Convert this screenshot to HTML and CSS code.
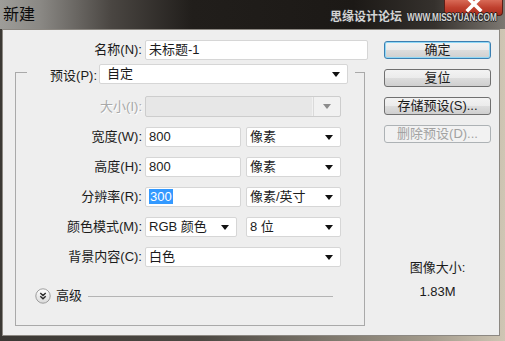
FILE: index.html
```html
<!DOCTYPE html>
<html lang="zh">
<head>
<meta charset="utf-8">
<title>新建</title>
<link rel="stylesheet" href="styles.css">
</head>
<body>
<div class="window">
  <div class="titlebar">
    <span class="title">新建</span>
    <div class="close">
      <svg width="59" height="16" viewBox="0 0 59 16"><path d="M24 -2 L36 10 M36 -2 L24 10" stroke="#fff" stroke-width="3.6" stroke-linecap="square" fill="none"/></svg>
    </div>
    <div class="watermark"><span class="wm-cn">思缘设计论坛</span><span class="wm-en">WWW.MISSYUAN.COM</span></div>
  </div>
  <div class="panel">
    <div class="form">
      <div class="row">
        <span class="lbl lbl-top">名称(N):</span>
        <div class="field text w-name">未标题-1</div>
      </div>
      <fieldset class="group">
        <legend class="legend">
          <div class="legend-inner">
            <span class="lbl-p">预设(P):</span>
            <div class="field combo w-preset"><span>自定</span><i class="arrow"></i></div>
          </div>
        </legend>
        <div class="group-body">
          <div class="row r-size">
            <span class="lbl disabled">大小(I):</span>
            <div class="field combo dis w-full"><span></span><b class="sep"></b><i class="arrow grey"></i></div>
          </div>
          <div class="row">
            <span class="lbl">宽度(W):</span>
            <div class="field text w-num">800</div>
            <div class="field combo w-unit"><span>像素</span><i class="arrow"></i></div>
          </div>
          <div class="row">
            <span class="lbl">高度(H):</span>
            <div class="field text w-num">800</div>
            <div class="field combo w-unit"><span>像素</span><i class="arrow"></i></div>
          </div>
          <div class="row">
            <span class="lbl">分辨率(R):</span>
            <div class="field text w-num"><span class="sel">300</span></div>
            <div class="field combo w-unit"><span>像素/英寸</span><i class="arrow"></i></div>
          </div>
          <div class="row">
            <span class="lbl">颜色模式(M):</span>
            <div class="field combo w-mode"><span>RGB 颜色</span><i class="arrow"></i></div>
            <div class="field combo w-bits"><span>8 位</span><i class="arrow"></i></div>
          </div>
          <div class="row">
            <span class="lbl">背景内容(C):</span>
            <div class="field combo w-full"><span>白色</span><i class="arrow"></i></div>
          </div>
          <div class="advanced">
            <svg class="adv-icon" width="16" height="16" viewBox="0 0 16 16">
              <defs><linearGradient id="g" x1="0" y1="0" x2="0" y2="1"><stop offset="0" stop-color="#ffffff"/><stop offset="1" stop-color="#d9d9d9"/></linearGradient></defs>
              <circle cx="8" cy="8" r="7.2" fill="url(#g)" stroke="#9d9d9d" stroke-width="1"/>
              <path d="M5.3 5 L8 7.6 L10.7 5 M5.3 8.2 L8 10.8 L10.7 8.2" stroke="#2a2a2a" stroke-width="1.4" fill="none"/>
            </svg>
            <span class="adv-text">高级</span>
            <span class="adv-line"></span>
          </div>
        </div>
      </fieldset>
    </div>
    <div class="side">
      <div class="btn default">确定</div>
      <div class="btn">复位</div>
      <div class="btn">存储预设(S)...</div>
      <div class="btn disabled-btn">删除预设(D)...</div>
      <div class="info">
        <div>图像大小:</div>
        <div class="info-val">1.83M</div>
      </div>
    </div>
  </div>
</div>
</body>
</html>
```

FILE: styles.css
```css
* { box-sizing: border-box; }
html, body { margin: 0; padding: 0; }
body {
  width: 505px;
  height: 341px;
  overflow: hidden;
  font-family: "Liberation Sans", "Noto Sans CJK SC", sans-serif;
  font-size: 13px;
  color: #1b1b1b;
  background: #2e2b28;
}
.window {
  width: 505px;
  height: 341px;
  display: flex;
  flex-direction: column;
  background: linear-gradient(to right, #3b3834 0%, #4d4943 40%, #a39b8c 85%, #cfc6b4 100%);
}
.titlebar {
  height: 29px;
  flex: none;
  position: relative;
  background: linear-gradient(to right, #9e9d99 0%, #8a8884 8%, #4a4642 22%, #211e1b 38%, #1c1916 70%, #35312d 86%, #7d7872 100%);
}
.title {
  display: block;
  padding: 3px 0 0 3px;
  font-family: "Noto Sans CJK SC", sans-serif;
  font-size: 16px;
  line-height: 20px;
  color: #0c0c0c;
}
.close {
  position: absolute;
  left: 444px;
  top: 0;
  width: 59px;
  height: 16px;
  border: 1px solid #5a1f18;
  border-top: none;
  border-radius: 0 0 4px 4px;
  background: linear-gradient(#d86a57, #c0412f 50%, #a92c1d 100%);
  overflow: hidden;
}
.close svg { display: block; margin: 0 0 0 -1px; }
.watermark {
  position: absolute;
  left: 330px;
  top: 8px;
  width: 172px;
  display: flex;
  align-items: flex-end;
  z-index: 2;
  white-space: nowrap;
  color: #d4d4d4;
  text-shadow: 1px 0 0 #222, -1px 0 0 #222, 0 1px 0 #222, 0 -1px 0 #222;
}
.wm-cn {
  font-family: "Noto Sans CJK SC", sans-serif;
  font-size: 12px;
  font-weight: bold;
  line-height: 16px;
}
.wm-en {
  display: inline-block;
  margin-left: 5px;
  font-family: "Liberation Sans", sans-serif;
  font-size: 10px;
  font-weight: bold;
  line-height: 12px;
  transform: scaleX(0.82);
  transform-origin: left bottom;
}
.panel {
  flex: 1;
  margin: 0 5px 5px 2px;
  border: 1px solid #8c8882;
  background: #eeeeee;
  display: flex;
}
.form {
  width: 365px;
  padding-top: 10px;
}
.row {
  display: flex;
  align-items: center;
  height: 20px;
}
.lbl {
  width: 129px;
  padding-right: 3px;
  text-align: right;
  white-space: nowrap;
  line-height: 20px;
}
.lbl-top { width: 142px; }
.lbl.disabled { color: #a9a9a9; text-shadow: 1px 1px 0 #ffffff; }
.field {
  height: 20px;
  background: #ffffff;
  border: 1px solid #d6d6d6;
  border-radius: 2px;
  line-height: 18px;
  padding-left: 3px;
  white-space: nowrap;
}
.combo {
  display: flex;
  align-items: center;
  padding-right: 7px;
}
.combo span { flex: 1; }
.arrow {
  width: 0;
  height: 0;
  border-left: 4px solid transparent;
  border-right: 4px solid transparent;
  border-top: 5px solid #111111;
}
.arrow.grey { border-top-color: #8c8c8c; }
.combo.dis {
  background: #e7e7e7;
  border-color: #cdcdcd;
  padding-right: 0;
  box-shadow: inset -28px 0 0 #f1f1f1;
}
.combo.dis .sep {
  width: 1px;
  align-self: stretch;
  background: #dadada;
  margin-right: 9px;
}
.combo.dis .arrow { margin-right: 9px; }
.w-name { width: 223px; }
.w-preset { width: 249px; padding-left: 7px; }
.w-full { width: 196px; }
.w-num { width: 96px; }
.w-unit { width: 95px; margin-left: 5px; }
.w-mode { width: 92px; }
.w-bits { width: 95px; margin-left: 9px; }
.sel { background: #3399ff; color: #ffffff; padding: 0 1px; }
.group {
  margin: 0 0 0 12px;
  padding: 0;
  width: 350px;
  min-width: 0;
  border: 1px solid #a9a9a9;
}
.legend {
  margin-left: 11px;
  padding: 4px 7px 0 0;
}
.legend-inner {
  display: flex;
  align-items: center;
  height: 20px;
}
.lbl-p {
  width: 72px;
  padding-right: 2px;
  text-align: right;
  white-space: nowrap;
}
.group-body {
  padding: 12px 0 21px 0;
  display: flex;
  flex-direction: column;
  gap: 10px;
}
.r-size { height: 21px; }
.r-size .field { height: 21px; }
.advanced {
  margin-top: 11px;
  height: 16px;
  display: flex;
  align-items: center;
  padding-left: 19px;
}
.adv-icon { display: block; flex: none; }
.adv-text { margin-left: 5px; line-height: 16px; }
.adv-line {
  flex: 1;
  height: 1px;
  background: #b4b4b4;
  margin: 0 31px 0 6px;
}
.side {
  margin-left: 16px;
  width: 107px;
  padding-top: 11px;
  display: flex;
  flex-direction: column;
  gap: 10px;
}
.btn {
  height: 18px;
  border: 1px solid #707070;
  border-radius: 3px;
  background: linear-gradient(#f3f3f3, #ebebeb 50%, #dddddd 51%, #cfcfcf);
  text-align: center;
  line-height: 16px;
  white-space: nowrap;
}
.btn.default {
  border-color: #3c7fb1;
  box-shadow: inset 0 0 0 1px #8fd8f6;
}
.btn.disabled-btn {
  border-color: #adb2b5;
  background: #f2f2f2;
  color: #a2a2a2;
}
.info {
  margin-top: 107px;
  text-align: center;
  line-height: 16px;
}
.info-val { margin-top: 8px; }
```
